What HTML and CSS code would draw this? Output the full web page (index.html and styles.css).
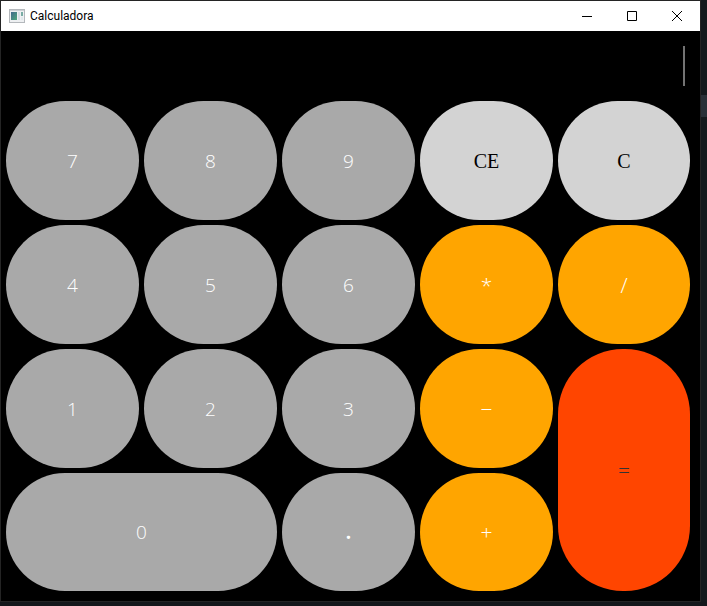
FILE: index.html
```html
<!DOCTYPE html>
<html lang="es">
<head>
<meta charset="utf-8">
<title>Calculadora</title>
<link rel="stylesheet" href="styles.css">
</head>
<body>
<main class="window">
  <header class="titlebar">
    <svg class="app-icon" viewBox="0 0 16 14" aria-hidden="true">
      <defs>
        <linearGradient id="pane" x1="0" y1="0" x2="1" y2="1">
          <stop offset="0" stop-color="#41698c"/>
          <stop offset="1" stop-color="#4fa77c"/>
        </linearGradient>
      </defs>
      <rect x=".5" y=".5" width="15" height="13" fill="#eef0f2" stroke="#b4b8bc"/>
      <path d="M1 1.5h14" stroke="#ccd0d4"/>
      <rect x="2" y="3" width="6" height="8" fill="url(#pane)"/>
      <rect x="9" y="3" width="2" height="8" fill="#d8dfe5"/>
      <rect x="12" y="3" width="2" height="4" fill="#79aca4"/>
      <rect x="12" y="8" width="2" height="3" fill="#e1e8ec"/>
    </svg>
    <h1 class="title">Calculadora</h1>
    <button class="control" type="button" aria-label="Minimizar">
      <svg viewBox="0 0 10 10" aria-hidden="true"><path d="M0 5.5h10"/></svg>
    </button>
    <button class="control" type="button" aria-label="Maximizar">
      <svg viewBox="0 0 10 10" aria-hidden="true"><path d="M.5.5h9v9h-9z"/></svg>
    </button>
    <button class="control" type="button" aria-label="Cerrar">
      <svg viewBox="0 0 10 10" aria-hidden="true"><path d="M0 0l10 10M10 0L0 10"/></svg>
    </button>
  </header>
  <div class="display">
    <input class="entry" type="text" aria-label="Resultado">
    <span class="caret"></span>
  </div>
  <div class="keys">
    <button class="key" type="button">7</button>
    <button class="key" type="button">8</button>
    <button class="key" type="button">9</button>
    <button class="key clear" type="button">CE</button>
    <button class="key clear" type="button">C</button>
    <button class="key" type="button">4</button>
    <button class="key" type="button">5</button>
    <button class="key" type="button">6</button>
    <button class="key operator" type="button">*</button>
    <button class="key operator" type="button">/</button>
    <button class="key" type="button">1</button>
    <button class="key" type="button">2</button>
    <button class="key" type="button">3</button>
    <button class="key operator" type="button">−</button>
    <button class="key equals" type="button">=</button>
    <button class="key zero" type="button">0</button>
    <button class="key point" type="button">.</button>
    <button class="key operator" type="button">+</button>
  </div>
</main>
<aside class="backdrop"></aside>
</body>
</html>
```
FILE: styles.css
```css
* {
  box-sizing: border-box;
}

body {
  display: flex;
  height: 100vh;
  margin: 0;
  padding-bottom: 4px;
  overflow: hidden;
  background: #14171b;
}

.window {
  display: flex;
  flex: 1;
  flex-direction: column;
  border: 1px solid #242424;
  background: #000;
}

.backdrop {
  width: 6px;
  background: linear-gradient(#14191c 95px, #293037 95px, #293037 117px, #14191c 117px);
}

.titlebar {
  display: flex;
  align-items: center;
  height: 30px;
  padding: 0 1px 0 8px;
  background: #fff;
}

.app-icon {
  width: 16px;
  height: 14px;
}

.title {
  flex: 1;
  margin: 0 0 0 5px;
  color: #000;
  font: 400 12px/16px Roboto, "Open Sans", sans-serif;
}

.control {
  display: grid;
  place-items: center;
  width: 45px;
  height: 30px;
  padding: 0;
  border: 0;
  background: none;
}

.control svg {
  width: 10px;
  height: 10px;
  fill: none;
  stroke: #000;
}

.display {
  display: flex;
  align-items: center;
  height: 70px;
  padding: 0 15px 0 5px;
}

.entry {
  flex: 1;
  height: 60px;
  padding: 0;
  border: 0;
  outline: 0;
  background: #000;
  color: #fff;
  font: 36px "Liberation Mono", monospace;
  text-align: right;
}

.caret {
  width: 2px;
  height: 40px;
  background: #737373;
}

.keys {
  display: grid;
  flex: 1;
  grid-template-columns: repeat(4, 133fr) 132fr;
  grid-template-rows: repeat(3, 119fr) 118fr;
  gap: 5px;
  padding: 0 10px 10px 5px;
}

.key {
  min-width: 0;
  padding: 0;
  border: 0;
  border-radius: 65px;
  background: #a9a9a9;
  color: #fff;
  font: 300 19px/24px "Open Sans", sans-serif;
}

.clear {
  background: #d3d3d3;
  color: #000;
  font: 400 20px/24px "Liberation Serif", serif;
}

.operator {
  background: #ffa500;
  font-size: 21px;
}

.equals {
  grid-row: span 2;
  background: #ff4500;
  color: #333;
  font-size: 21px;
}

.zero {
  grid-column: span 2;
}

.point {
  font-weight: 700;
}
```
